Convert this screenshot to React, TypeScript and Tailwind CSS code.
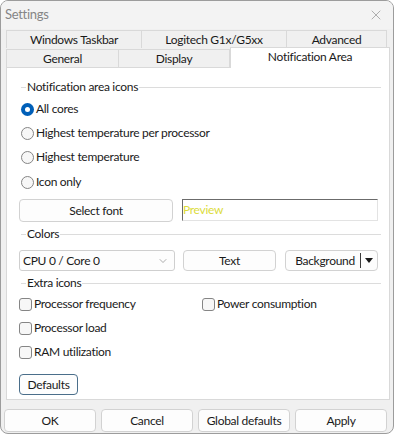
import { X, ChevronDown } from 'lucide-react';

const font = { fontFamily: 'Lato, "Segoe UI", sans-serif' };

function Group({ label }: { label: string }) {
  return (
    <div className="flex items-center h-[16px] ml-[14px] mr-[8px]">
      <div className="w-[5px] border-t border-[#dcdcdc]" />
      <span className="px-[1px] text-[#1a1a1a]">{label}</span>
      <div className="flex-1 border-t border-[#dcdcdc]" />
    </div>
  );
}

function Radio({ label, checked }: { label: string; checked?: boolean }) {
  return (
    <div className="flex items-center h-[16px] pl-[14px] gap-[2px]">
      {checked ? (
        <span className="w-[13px] h-[13px] rounded-full bg-[#005fb8] flex items-center justify-center">
          <span className="w-[5px] h-[5px] rounded-full bg-white" />
        </span>
      ) : (
        <span className="w-[13px] h-[13px] rounded-full border border-[#858585] bg-[#f7f7f7]" />
      )}
      <span>{label}</span>
    </div>
  );
}

function Check({ label }: { label: string }) {
  return (
    <div className="flex items-center h-[16px] gap-[2px]">
      <span className="w-[13px] h-[13px] rounded-[3px] border border-[#858585] bg-[#f7f7f7]" />
      <span>{label}</span>
    </div>
  );
}

function Btn({ label, className = '' }: { label: string; className?: string }) {
  return (
    <div
      className={
        'flex items-center justify-center rounded-[4px] border border-[#d2d2d2] bg-[#fdfdfd] text-[#1a1a1a] ' +
        className
      }
    >
      {label}
    </div>
  );
}

export default function App() {
  return (
    <div className="bg-white w-[395px] h-[435px]" style={font}>
      <div className="w-[394px] h-[434px] rounded-[8px] border border-[#9c9c9c] bg-[#f0f0f0] overflow-hidden text-[12px] tracking-[-0.3px] text-[#1a1a1a] flex flex-col">
        {/* title bar */}
        <div className="h-[28px] flex items-center justify-between pl-[4px] pr-[9px] bg-[#f3f3f3]">
          <span className="text-[13px] text-[#858585]">Settings</span>
          <X size={16} strokeWidth={1} className="text-[#8a8a8a]" />
        </div>

        {/* tabs */}
        <div className="ml-[5px] mt-[1px]">
          <div className="flex h-[18px]">
            <div className="w-[136px] flex items-center justify-center border border-b-0 border-[#d9d9d9] bg-[#f0f0f0]">
              Windows Taskbar
            </div>
            <div className="w-[145px] flex items-center justify-center border border-l-0 border-b-0 border-[#d9d9d9]">
              Logitech G1x/G5xx
            </div>
            <div className="w-[100px] flex items-center justify-center border border-l-0 border-b-0 border-[#d9d9d9]">
              Advanced
            </div>
          </div>
          <div className="flex items-end h-[19px]">
            <div className="w-[113px] h-[18px] flex items-center justify-center border border-b-0 border-[#d9d9d9]">
              General
            </div>
            <div className="w-[111px] h-[18px] flex items-center justify-center border border-l-0 border-b-0 border-[#d9d9d9]">
              Display
            </div>
            <div className="w-[160px] h-[21px] pb-[2px] flex items-center justify-center border border-b-0 border-[#d9d9d9] bg-white relative z-10 -mb-px">
              Notification Area
            </div>
          </div>
        </div>

        {/* panel */}
        <div className="ml-[5px] w-[384px] h-[333px] bg-white border border-[#d9d9d9] flex flex-col">
          <div className="mt-[11px]">
            <Group label="Notification area icons" />
          </div>
          <div className="mt-[6px] flex flex-col gap-[8px]">
            <Radio label="All cores" checked />
            <Radio label="Highest temperature per processor" />
            <Radio label="Highest temperature" />
          </div>
          <div className="mt-[9px]">
            <Radio label="Icon only" />
          </div>

          <div className="mt-[9px] flex gap-[9px] pl-[12px]">
            <Btn label="Select font" className="w-[154px] h-[23px]" />
            <div className="w-[196px] h-[22px] border border-t-[#6b6b6b] border-l-[#6b6b6b] border-r-[#e3e3e3] border-b-[#e3e3e3] flex items-center">
              <span className="text-[12px] text-[#dcdc3c]">Preview</span>
            </div>
          </div>

          <div className="mt-[4px]">
            <Group label="Colors" />
          </div>

          <div className="mt-[8px] flex items-center pl-[12px] h-[21px]">
            <div className="w-[156px] h-[21px] rounded-[3px] border border-[#cfcfcf] bg-[#fdfdfd] flex items-center justify-between pl-[3px] pr-[5px]">
              <span>CPU 0 / Core 0</span>
              <ChevronDown size={12} strokeWidth={1} className="text-[#5a5a5a]" />
            </div>
            <Btn label="Text" className="ml-[8px] w-[93px] h-[21px]" />
            <div className="ml-[9px] w-[93px] h-[21px] rounded-[4px] border border-[#d2d2d2] bg-[#fdfdfd] flex items-center">
              <span className="flex-1 text-center pl-[4px]">Background</span>
              <div className="w-[1px] h-[15px] bg-[#3a3a3a]" />
              <svg width="14" height="8" viewBox="0 0 14 8" className="mx-[1px]">
                <path d="M3 1h8l-4 5z" fill="#1a1a1a" />
              </svg>
            </div>
          </div>

          <div className="mt-[4px]">
            <Group label="Extra icons" />
          </div>

          <div className="mt-[5px] pl-[12px] flex flex-col gap-[8px]">
            <div className="flex">
              <div className="w-[183px]">
                <Check label="Processor frequency" />
              </div>
              <Check label="Power consumption" />
            </div>
            <Check label="Processor load" />
            <Check label="RAM utilization" />
          </div>

          <div className="mt-[14px] pl-[12px]">
            <div className="w-[59px] h-[21px] rounded-[4px] border border-[#4a6e8a] bg-[#fdfdfd] flex items-center justify-center">
              Defaults
            </div>
          </div>
        </div>

        {/* bottom buttons */}
        <div className="mt-[9px] ml-[3px] flex gap-[5px]">
          <Btn label="OK" className="w-[92px] h-[23px]" />
          <Btn label="Cancel" className="w-[92px] h-[23px]" />
          <Btn label="Global defaults" className="w-[92px] h-[23px]" />
          <Btn label="Apply" className="w-[92px] h-[23px]" />
        </div>
      </div>
    </div>
  );
}
